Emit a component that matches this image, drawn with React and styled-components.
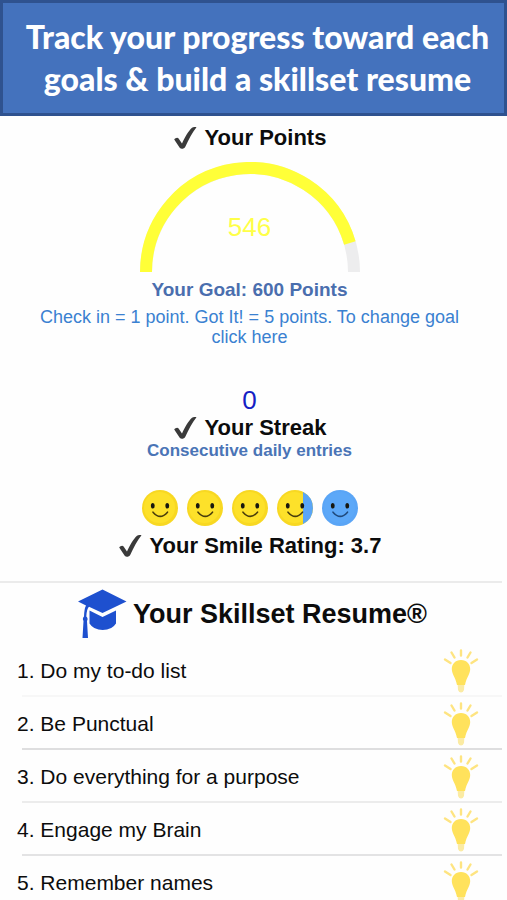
import React from "react";
import styled, { createGlobalStyle } from "styled-components";

const GlobalStyle = createGlobalStyle`
  * { box-sizing: border-box; }
  body {
    margin: 0;
    background: #fefefe;
    color: #0c0c0c;
    font-family: "Liberation Sans", Arial, Helvetica, sans-serif;
  }
`;

const Page = styled.main`
  width: 100%;
`;

const Banner = styled.header`
  padding: 13px 8px 13px 16px;
  border: 3px solid #2f528f;
  background: #4472bd;
`;

const BannerTitle = styled.h1`
  margin: 0;
  color: #ffffff;
  font-family: Lato, "Open Sans", sans-serif;
  font-size: 32px;
  font-weight: 900;
  line-height: 42px;
  text-align: center;
`;

const Stats = styled.div`
  display: flex;
  flex-direction: column;
  padding: 8px 8px 0 0;
`;

const Stat = styled.section`
  display: flex;
  flex-direction: column;
  align-items: center;
  padding-bottom: ${(p) => p.$gap || 0}px;
`;

const Heading = styled.h2`
  display: flex;
  align-items: center;
  justify-content: center;
  gap: 8px;
  margin: 0;
  font-size: 22px;
  line-height: 28px;
`;

const CheckIcon = styled.svg`
  width: 24px;
  height: 24px;
  fill: #3a3a3a;
`;

const Gauge = styled.div`
  display: grid;
  place-items: center;
  margin-top: 10px;

  > * { grid-area: 1 / 1; }
`;

const GaugeValue = styled.output`
  padding-top: 20px;
  color: #ffff48;
  font-size: 26px;
  line-height: 30px;
`;

const Goal = styled.p`
  margin: 6px 0 0;
  color: #4a6eae;
  font-size: 19px;
  font-weight: 700;
  line-height: 24px;
`;

const Info = styled.p`
  max-width: 450px;
  margin: 5px 0 0;
  color: #3a81d1;
  font-size: 18px;
  line-height: 20px;
  text-align: center;
`;

const InfoLink = styled.a`
  color: inherit;
  text-decoration: none;
`;

const StreakCount = styled.output`
  color: #1420c4;
  font-size: 26px;
  line-height: 28px;
`;

const Caption = styled.p`
  margin: 0;
  color: #4a74b6;
  font-size: 17px;
  font-weight: 700;
  line-height: 18px;
`;

const Smiles = styled.div`
  display: flex;
  gap: 9px;
  margin-bottom: 6px;
`;

const Resume = styled.section`
  margin-right: 5px;
  border-top: 2px solid #ebebeb;
`;

const ResumeTitle = styled.h2`
  display: flex;
  align-items: center;
  justify-content: center;
  gap: 6px;
  height: 61px;
  margin: 0;
  padding-left: 2px;
  font-size: 27px;
  line-height: 32px;
`;

const SkillList = styled.ol`
  margin: 0;
  padding: 0;
  list-style: none;
`;

const Skill = styled.li`
  display: flex;
  align-items: center;
  justify-content: space-between;
  height: 53px;
  padding: 0 23px 0 17px;
  background: linear-gradient(${(p) => p.$line}, ${(p) => p.$line}) right bottom / calc(100% - 22px) 2px no-repeat;
  font-size: 21px;
  line-height: 28px;
`;

function Check() {
  return (
    <CheckIcon viewBox="0 0 24 24" aria-hidden="true">
      <path d="M1.200 13.500C2.300 11.700 4.600 11 5.600 12.400L9 17.600C11.600 11.500 15.500 5 19 1.800C20 .8 22.700 .6 23.500 1.300C19.300 6.800 15.600 13.500 12.300 20.800C11.600 22.300 10.200 22.800 8.800 22.800C7.500 22.800 6.900 22.300 6.200 21.100Z" />
    </CheckIcon>
  );
}

function PointsGauge({ value, goal }) {
  const angle = Math.PI * (1 - value / goal);
  const x = 110 + 104 * Math.cos(angle);
  const y = 110 - 104 * Math.sin(angle);
  return (
    <Gauge>
      <svg width="220" height="110" viewBox="0 0 220 110" fill="none" strokeWidth="12" aria-hidden="true">
        <path d="M6 110A104 104 0 0 1 214 110" stroke="#ededee" />
        <path d={`M6 110A104 104 0 0 1 ${x} ${y}`} stroke="#ffff38" />
      </svg>
      <GaugeValue>{value}</GaugeValue>
    </Gauge>
  );
}

function Smile({ kind }) {
  const blue = kind === "empty";
  return (
    <svg width="36" height="36" viewBox="0 0 36 36" aria-hidden="true">
      <circle cx="18" cy="18" r="18" fill={blue ? "#5aa5f6" : "#f8d822"} />
      <circle cx="17.500" cy="17.500" r="15.500" fill={blue ? "#5ca8f8" : "#fde12a"} />
      {kind === "partial" && <path d="M26 1.900A18 18 0 0 1 26 34.100Z" fill="#5aa5f6" />}
      <ellipse cx="10.800" cy="15.800" rx="1.900" ry="2.800" fill="#18180f" />
      <ellipse cx="25.300" cy="15.800" rx="1.900" ry="2.800" fill="#18180f" />
      <path d="M11 22.200Q18.200 30.500 25.500 22.200" fill="none" stroke={blue ? "#204a7c" : "#4a3e0c"} strokeWidth="1.600" strokeLinecap="round" />
    </svg>
  );
}

function Cap() {
  return (
    <svg width="50" height="50" viewBox="0 0 50 50" fill="#1e50cf" aria-hidden="true">
      <path d="M25.500 .5L49.500 12.500L25.500 24L12 17.800Q9.800 19.500 9.300 27.500Q11.500 29.500 10 32L11 49H5.500L6.500 32Q5 29.500 7 27.500Q7.200 20 9 16.500L1 12.500Z" />
      <path d="M12.500 21.500L25.500 28L39 21.500V34.500Q35 41 25.700 41Q16.500 41 12.500 34.500Z" />
    </svg>
  );
}

function Bulb() {
  return (
    <svg width="36" height="44" viewBox="0 0 36 44" aria-hidden="true">
      <path d="M18 1.500V6.500M8.500 3.500L11.500 8.500M27.500 3.500L24.500 8.500M2 10.500L7.500 14M34 10.500L28.500 14" stroke="#fee481" strokeWidth="2.400" strokeLinecap="round" />
      <path d="M14.500 33H21.500L21 41Q20 43.500 18 43.500Q16 43.500 15 41Z" fill="#fbeba3" />
      <path d="M18 11C23.700 11 27.200 15 27.200 20C27.200 25 23.600 28 22 36H14C12.400 28 8.800 25 8.800 20C8.800 15 12.300 11 18 11Z" fill="#ffe25c" />
    </svg>
  );
}

const smiles = ["full", "full", "full", "partial", "empty"];

const skills = [
  { name: "Do my to-do list", line: "#f7f7f7" },
  { name: "Be Punctual", line: "#dededf" },
  { name: "Do everything for a purpose", line: "#ececec" },
  { name: "Engage my Brain", line: "#e3e3e4" },
  { name: "Remember names", line: "#ececec" },
];

export default function App() {
  return (
    <Page>
      <GlobalStyle />
      <Banner>
        <BannerTitle>Track your progress toward each goals &amp; build a skillset resume</BannerTitle>
      </Banner>
      <Stats>
        <Stat $gap={39}>
          <Heading><Check />Your Points</Heading>
          <PointsGauge value={546} goal={600} />
          <Goal>Your Goal: 600 Points</Goal>
          <Info>
            Check in = 1 point. Got It! = 5 points. To change goal <InfoLink href="#goal">click here</InfoLink>
          </Info>
        </Stat>
        <Stat $gap={30}>
          <StreakCount>0</StreakCount>
          <Heading><Check />Your Streak</Heading>
          <Caption>Consecutive daily entries</Caption>
        </Stat>
        <Stat $gap={21}>
          <Smiles role="img" aria-label="3.7 out of 5 smiles">
            {smiles.map((kind, i) => <Smile key={i} kind={kind} />)}
          </Smiles>
          <Heading><Check />Your Smile Rating: 3.7</Heading>
        </Stat>
      </Stats>
      <Resume>
        <ResumeTitle><Cap />Your Skillset Resume®</ResumeTitle>
        <SkillList>
          {skills.map((skill, i) => (
            <Skill key={skill.name} $line={skill.line}>
              <span>{i + 1}. {skill.name}</span>
              <Bulb />
            </Skill>
          ))}
        </SkillList>
      </Resume>
    </Page>
  );
}
